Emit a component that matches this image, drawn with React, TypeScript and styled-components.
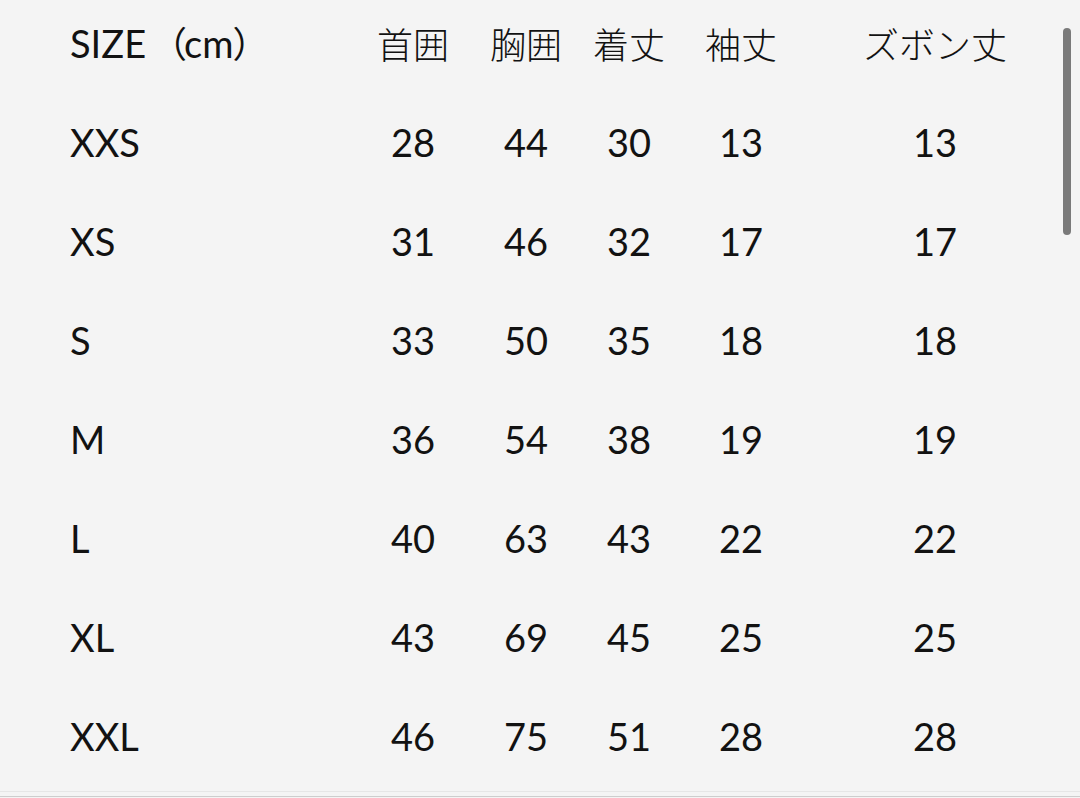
import React from "react";
import styled, { createGlobalStyle } from "styled-components";

const GlobalStyle = createGlobalStyle`
  html, body {
    margin: 0;
    padding: 0;
    background: #f4f4f4;
  }
  body {
    font-family: Lato, "Noto Sans CJK JP", sans-serif;
    color: #121212;
  }
`;

const Page = styled.div`
  position: relative;
  width: 1080px;
  height: 798px;
  display: flex;
  flex-direction: column;
  overflow: hidden;
  background: #f4f4f4;
`;

const Table = styled.div`
  flex: 1;
  padding-left: 70px;
`;

const Row = styled.div<{ $header?: boolean }>`
  display: grid;
  grid-template-columns: 287px 112px 114px 92px 132px 256px;
  align-items: center;
  height: ${(p) => (p.$header ? "86px" : "99px")};
  padding-bottom: ${(p) => (p.$header ? "6px" : "0")};
  font-size: 38px;
  font-weight: 400;
  line-height: 1;
`;

const SizeCell = styled.div`
  text-align: left;
  white-space: nowrap;
`;

const Paren = styled.span<{ $open?: boolean }>`
  font-family: "Noto Sans CJK JP", sans-serif;
  font-size: 36px;
  font-weight: 400;
  margin: ${(p) => (p.$open ? "0 -3px 0 5px" : "0 0 0 -1px")};
`;

const Cell = styled.div`
  text-align: center;
  white-space: nowrap;
`;

const HeadCell = styled(Cell)`
  font-family: "Noto Sans CJK JP", sans-serif;
  font-weight: 300;
  font-size: 36px;
`;

const Scrollbar = styled.div`
  position: absolute;
  top: 28px;
  left: 1063px;
  width: 8px;
  height: 207px;
  border-radius: 4px;
  background: #7a7a7a;
`;

const Footer = styled.div`
  height: 4px;
  border-top: 1px solid #e6e6e6;
  border-bottom: 1px solid #cdcdcd;
  margin-bottom: 1px;
`;

const headers = ["首囲", "胸囲", "着丈", "袖丈", "ズボン丈"];

const rows: [string, number[]][] = [
  ["XXS", [28, 44, 30, 13, 13]],
  ["XS", [31, 46, 32, 17, 17]],
  ["S", [33, 50, 35, 18, 18]],
  ["M", [36, 54, 38, 19, 19]],
  ["L", [40, 63, 43, 22, 22]],
  ["XL", [43, 69, 45, 25, 25]],
  ["XXL", [46, 75, 51, 28, 28]],
];

export default function App() {
  return (
    <>
      <GlobalStyle />
      <Page>
        <Table>
          <Row $header>
            <SizeCell>
              SIZE<Paren $open>（</Paren>cm<Paren>）</Paren>
            </SizeCell>
            {headers.map((h) => (
              <HeadCell key={h}>{h}</HeadCell>
            ))}
          </Row>
          {rows.map(([size, values]) => (
            <Row key={size}>
              <SizeCell>{size}</SizeCell>
              {values.map((v, i) => (
                <Cell key={i}>{v}</Cell>
              ))}
            </Row>
          ))}
        </Table>
        <Footer />
        <Scrollbar />
      </Page>
    </>
  );
}
